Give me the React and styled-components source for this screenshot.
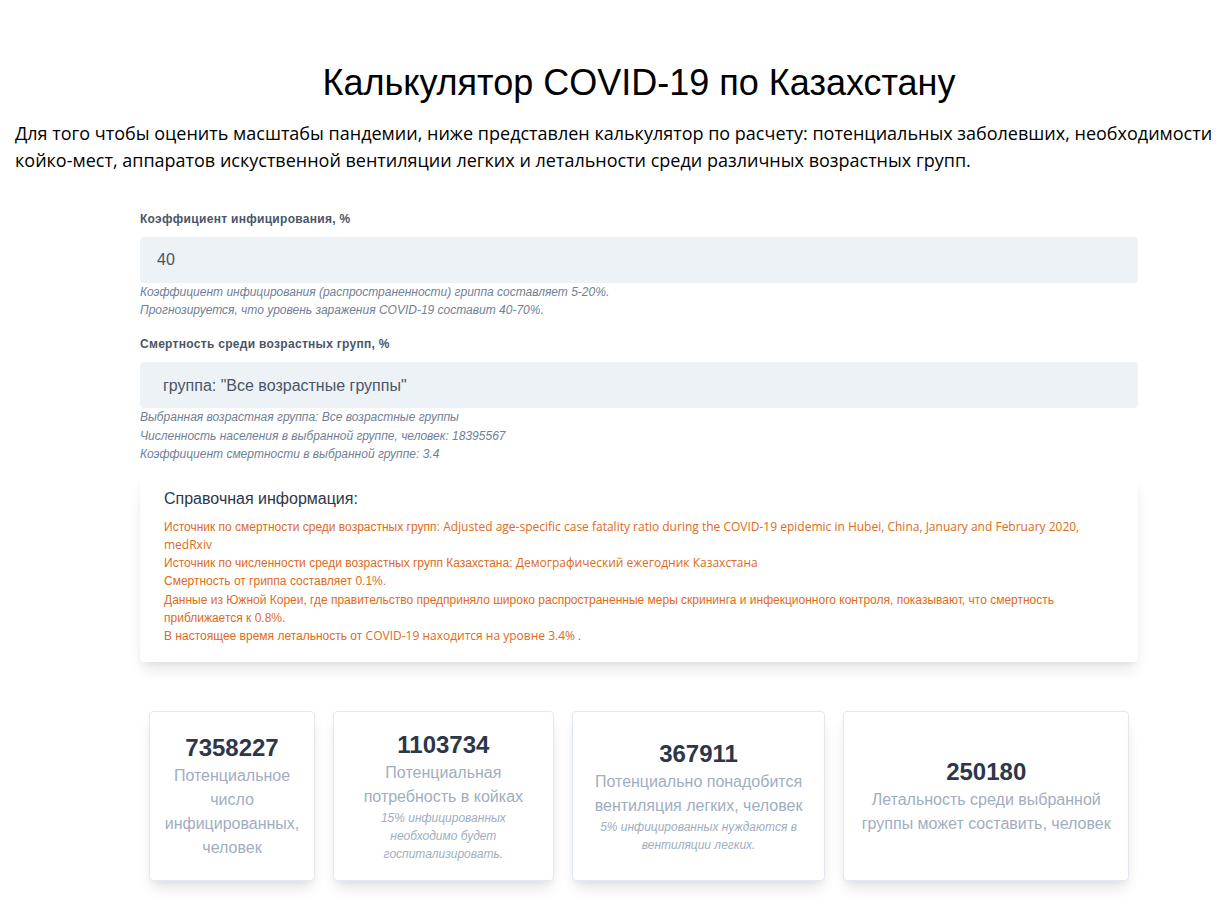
import React from 'react'
import styled, { createGlobalStyle } from 'styled-components'

const GlobalStyle = createGlobalStyle`
  html, body {
    margin: 0;
    padding: 0;
    overflow: hidden;
    background: #ffffff;
  }
  body {
    font-family: 'Liberation Sans', Arial, sans-serif;
  }
`

const Page = styled.div`
  width: 1278px;
  padding: 0 15px 40px;
  box-sizing: border-box;
`

const Title = styled.h1`
  margin: 62px 0 0;
  font-size: 36px;
  line-height: 42px;
  font-weight: 400;
  text-align: center;
  color: #000000;
`

const Intro = styled.p`
  margin: 16px 0 0;
  font-family: 'Open Sans', sans-serif;
  font-size: 18px;
  line-height: 27px;
  color: #000000;
`

const Form = styled.div`
  width: 998px;
  margin: 37px auto 0;
`

const Label = styled.label`
  display: block;
  margin-top: ${p => p.top || 0}px;
  font-size: 12px;
  line-height: 16px;
  font-weight: 700;
  letter-spacing: 0.025em;
  color: #4a5568;
`

const Field = styled.input`
  display: block;
  width: 100%;
  height: 46px;
  margin-top: 10px;
  box-sizing: border-box;
  padding: 0 17px;
  border: none;
  border-radius: 4px;
  background: #edf2f7;
  font-family: 'Liberation Sans', Arial, sans-serif;
  font-size: 16px;
  color: #4a5568;
  outline: none;
`

const Select = styled.select`
  display: block;
  width: 100%;
  height: 46px;
  margin-top: 10px;
  box-sizing: border-box;
  padding: 0 23px;
  border: none;
  border-radius: 4px;
  background: #edf2f7;
  appearance: none;
  font-family: 'Liberation Sans', Arial, sans-serif;
  font-size: 16px;
  color: #4a5568;
  outline: none;
`

const Help = styled.p`
  margin: 0;
  font-size: 12px;
  line-height: ${p => p.lh || 18}px;
  font-style: italic;
  color: #718096;
`

const InfoCard = styled.div`
  margin-top: 13px;
  padding: 12px 24px 16px;
  background: #ffffff;
  border-radius: 4px;
  box-shadow: 0 10px 15px -3px rgba(0, 0, 0, 0.1), 0 4px 6px -2px rgba(0, 0, 0, 0.05);
`

const InfoTitle = styled.h3`
  margin: 0 0 9px;
  font-size: 16px;
  line-height: 20px;
  font-weight: 400;
  color: #2d3748;
`

const InfoLine = styled.p`
  margin: 0;
  font-size: 12px;
  line-height: 18.3px;
  color: #dd6b20;
`

const Source = styled.span`
  font-family: 'Open Sans', sans-serif;
`

const Stats = styled.div`
  display: flex;
  margin-top: 49px;
`

const StatCard = styled.div`
  width: ${p => p.w}px;
  height: 170px;
  margin: 0 9px;
  box-sizing: border-box;
  padding: 0 16px;
  display: flex;
  flex-direction: column;
  justify-content: center;
  align-items: center;
  text-align: center;
  background: #ffffff;
  border: 1px solid #e2e8f0;
  border-radius: 4px;
  box-shadow: 0 10px 15px -3px rgba(0, 0, 0, 0.1), 0 4px 6px -2px rgba(0, 0, 0, 0.05);
`

const StatValue = styled.div`
  font-size: 24px;
  line-height: 32px;
  font-weight: 700;
  color: #2d3748;
`

const StatLabel = styled.div`
  font-size: 16px;
  line-height: 24px;
  color: #a0aec0;
`

const StatNote = styled.div`
  font-size: 12px;
  line-height: 18px;
  font-style: italic;
  color: #a0aec0;
`

const stats = [
  { w: 166, value: '7358227', label: 'Потенциальное число инфицированных, человек' },
  {
    w: 221,
    value: '1103734',
    label: 'Потенциальная потребность в койках',
    note: '15% инфицированных необходимо будет госпитализировать.'
  },
  {
    w: 254,
    value: '367911',
    label: 'Потенциально понадобится вентиляция легких, человек',
    note: '5% инфицированных нуждаются в вентиляции легких.'
  },
  { w: 286, value: '250180', label: 'Летальность среди выбранной группы может составить, человек' }
]

const App = () => (
  <Page>
    <GlobalStyle />
    <Title>Калькулятор COVID-19 по Казахстану</Title>
    <Intro>
      Для того чтобы оценить масштабы пандемии, ниже представлен калькулятор по расчету: потенциальных
      заболевших, необходимости койко-мест, аппаратов искуственной вентиляции легких и летальности среди
      различных возрастных групп.
    </Intro>
    <Form>
      <Label>Коэффициент инфицирования, %</Label>
      <Field type="text" defaultValue="40" />
      <Help>Коэффициент инфицирования (распространенности) гриппа составляет 5-20%.</Help>
      <Help>Прогнозируется, что уровень заражения COVID-19 составит 40-70%.</Help>

      <Label top={17}>Смертность среди возрастных групп, %</Label>
      <Select defaultValue="all">
        <option value="all">группа: "Все возрастные группы"</option>
      </Select>
      <Help lh={18.5}>Выбранная возрастная группа: Все возрастные группы</Help>
      <Help lh={18.5}>Численность населения в выбранной группе, человек: 18395567</Help>
      <Help lh={18.5}>Коэффициент смертности в выбранной группе: 3.4</Help>

      <InfoCard>
        <InfoTitle>Справочная информация:</InfoTitle>
        <InfoLine>
          Источник по смертности среди возрастных групп:{' '}
          <Source>
            Adjusted age-specific case fatality ratio during the COVID-19 epidemic in Hubei, China, January and
            February 2020, medRxiv
          </Source>
        </InfoLine>
        <InfoLine>
          Источник по численности среди возрастных групп Казахстана:{' '}
          <Source>Демографический ежегодник Казахстана</Source>
        </InfoLine>
        <InfoLine>Смертность от гриппа составляет 0.1%.</InfoLine>
        <InfoLine>
          Данные из Южной Кореи, где правительство предприняло широко распространенные меры скрининга и
          инфекционного контроля, показывают, что смертность приближается к 0.8%.
        </InfoLine>
        <InfoLine>
          В настоящее время летальность от <Source>COVID-19 находится на уровне 3.4% .</Source>
        </InfoLine>
      </InfoCard>

      <Stats>
        {stats.map(s => (
          <StatCard key={s.value} w={s.w}>
            <StatValue>{s.value}</StatValue>
            <StatLabel>{s.label}</StatLabel>
            {s.note && <StatNote>{s.note}</StatNote>}
          </StatCard>
        ))}
      </Stats>
    </Form>
  </Page>
)

export default App
